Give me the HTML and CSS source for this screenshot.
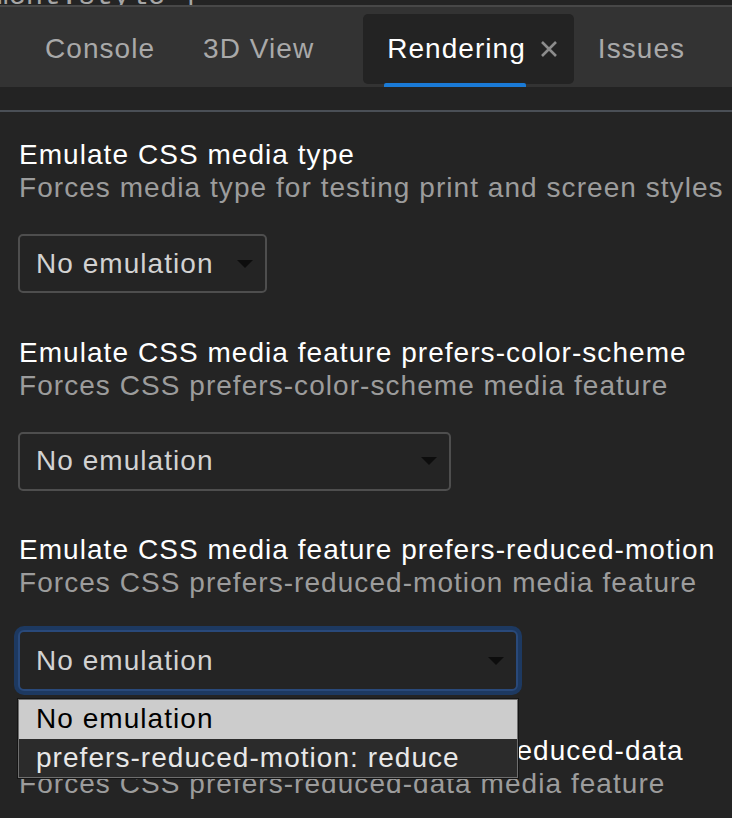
FILE: index.html
```html
<!DOCTYPE html>
<html lang="en">
<head>
<meta charset="utf-8">
<title>Rendering</title>
<link rel="stylesheet" href="styles.css">
</head>
<body>
<div class="code"><span class="code-text">ment.style {</span></div>
<div class="tabbar">
  <div class="tab tab-first">Console</div>
  <div class="tab">3D View</div>
  <div class="tab tab-active"><span class="tab-label">Rendering</span>
    <svg class="tab-close" width="18" height="18" viewBox="0 0 18 18"><path d="M2 2 L16 16 M16 2 L2 16" stroke="#8c8c8c" stroke-width="2.6" fill="none"/></svg>
  </div>
  <div class="tab tab-issues">Issues</div>
</div>
<div class="spacer"></div>
<div class="panel">
  <section class="section">
    <div class="title">Emulate CSS media type</div>
    <div class="subtitle">Forces media type for testing print and screen styles</div>
    <div class="select select-1"><span>No emulation</span><svg class="arrow" width="16" height="8" viewBox="0 0 16 8"><polygon points="0,0 16,0 8,8" fill="#0d0d0d"/></svg></div>
  </section>
  <section class="section">
    <div class="title">Emulate CSS media feature prefers-color-scheme</div>
    <div class="subtitle">Forces CSS prefers-color-scheme media feature</div>
    <div class="select select-2"><span>No emulation</span><svg class="arrow" width="16" height="8" viewBox="0 0 16 8"><polygon points="0,0 16,0 8,8" fill="#0d0d0d"/></svg></div>
  </section>
  <section class="section">
    <div class="title">Emulate CSS media feature prefers-reduced-motion</div>
    <div class="subtitle">Forces CSS prefers-reduced-motion media feature</div>
    <div class="select-wrap">
      <div class="select select-3 focused"><span>No emulation</span><svg class="arrow" width="16" height="8" viewBox="0 0 16 8"><polygon points="0,0 16,0 8,8" fill="#0d0d0d"/></svg></div>
      <ul class="dropdown">
        <li class="option option-selected">No emulation</li>
        <li class="option">prefers-reduced-motion: reduce</li>
      </ul>
    </div>
  </section>
  <section class="section">
    <div class="title">Emulate CSS media feature prefers-reduced-data</div>
    <div class="subtitle">Forces CSS prefers-reduced-data media feature</div>
  </section>
</div>
</body>
</html>
```
FILE: styles.css
```css
html, body {
  margin: 0;
  padding: 0;
  background: #242424;
  overflow: hidden;
}
body {
  font-family: "Liberation Sans", Arial, sans-serif;
  font-size: 28px;
  letter-spacing: 1.05px;
  width: 732px;
  height: 818px;
}
.code {
  height: 5px;
  overflow: hidden;
  background: #242424;
}
.code-text {
  display: block;
  font-family: "Liberation Mono", monospace;
  font-size: 29px;
  line-height: 26px;
  letter-spacing: 0;
  color: #a6a6a6;
  margin-top: -16px;
  margin-left: -9px;
  white-space: pre;
}
.tabbar {
  border-top: 2px solid #484848;
  background: #333333;
  display: flex;
  align-items: flex-start;
  padding-top: 7px;
  box-sizing: content-box;
  height: 73px;
}
.tab {
  height: 70px;
  display: flex;
  align-items: center;
  padding: 0 24px;
  color: #a9a9a9;
  white-space: nowrap;
}
.tab-first {
  margin-left: 21px;
}
.tab-active {
  position: relative;
  margin-left: 25px;
  background: #232323;
  border-radius: 5px;
  color: #ffffff;
  padding-right: 16px;
}
.tab-label {
  position: relative;
  height: 100%;
  display: flex;
  align-items: center;
}
.tab-label::after {
  content: "";
  position: absolute;
  left: -3px;
  right: 0;
  bottom: -3px;
  height: 4px;
  background: #1a7ad6;
  border-radius: 2px 2px 0 0;
}
.tab-close {
  margin-left: 14px;
  display: block;
}
.tab-issues {
  padding-left: 24px;
}
.spacer {
  height: 23px;
  border-bottom: 2px solid #4a4f56;
  background: #232323;
}
.panel {
  padding: 26px 0 0 18px;
}
.section {
  margin-bottom: 42.5px;
}
.title {
  color: #ffffff;
  line-height: 33px;
  white-space: nowrap;
  padding-left: 1px;
}
.subtitle {
  color: #9c9c9c;
  line-height: 33px;
  white-space: nowrap;
  padding-left: 1px;
}
.select {
  margin-top: 30px;
  height: 59px;
  box-sizing: border-box;
  border: 2px solid #4e4e4e;
  border-radius: 5px;
  background: #242424;
  display: flex;
  align-items: center;
  justify-content: space-between;
  padding: 0 12px 0 16px;
  color: #d2d2d2;
}
.select-1 { width: 249px; }
.select-2 { width: 433px; }
.select-3 { width: 500px; }
.arrow {
  display: block;
}
.select-wrap {
  position: relative;
  margin-top: 31px;
}
.select-wrap .select {
  margin-top: 0;
}
.focused {
  border-color: #29497a;
  box-shadow: 0 0 0 4px #1d3961;
  border-radius: 6px;
  height: 61px;
}
.dropdown {
  position: absolute;
  left: 0;
  top: 69px;
  width: 500px;
  box-sizing: border-box;
  margin: 0;
  padding: 0;
  list-style: none;
  border: 1px solid #6e6e6e;
  outline: 1px solid #151515;
  background: #2b2b2b;
  z-index: 2;
}
.option {
  height: 38.5px;
  line-height: 38.5px;
  padding-left: 17px;
  color: #e8e8e8;
  white-space: nowrap;
}
.option-selected {
  background: #cccccc;
  color: #000000;
}
```
